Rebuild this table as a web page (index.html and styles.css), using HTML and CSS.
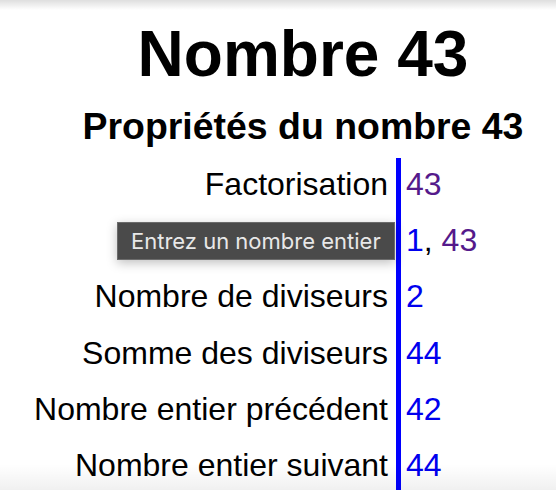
FILE: index.html
```html
<!DOCTYPE html>
<html lang="fr">
<head>
<meta charset="utf-8">
<title>Nombre 43</title>
<link rel="stylesheet" href="styles.css">
</head>
<body>
<header class="head">
  <h1 class="title">Nombre 43</h1>
  <h3 class="subtitle">Propriétés du nombre 43</h3>
</header>
<main class="props">
  <div class="label">Factorisation</div>
  <div class="value"><a class="visited" href="#">43</a></div>
  <div class="label"></div>
  <div class="value"><a class="link" href="#">1</a>, <a class="visited" href="#">43</a></div>
  <div class="label">Nombre de diviseurs</div>
  <div class="value"><a class="link" href="#">2</a></div>
  <div class="label">Somme des diviseurs</div>
  <div class="value"><a class="link" href="#">44</a></div>
  <div class="label">Nombre entier précédent</div>
  <div class="value"><a class="link" href="#">42</a></div>
  <div class="label">Nombre entier suivant</div>
  <div class="value"><a class="link" href="#">44</a></div>
</main>
<div class="tooltip">Entrez un nombre entier</div>
<div class="shade-top"></div>
<div class="shade-bottom"></div>
</body>
</html>
```
FILE: styles.css
```css
html, body {
  margin: 0;
  padding: 0;
  background: #ffffff;
  overflow: hidden;
}
body {
  font-family: "Liberation Sans", Arial, sans-serif;
  font-size: 32px;
  color: #000;
  width: 556px;
  height: 490px;
  position: relative;
}
.head {
  padding-left: 50px;
  text-align: center;
}
.title {
  font-size: 64px;
  font-weight: bold;
  margin: 17px 0 0;
  line-height: normal;
}
.subtitle {
  font-size: 37.44px;
  font-weight: bold;
  margin: 14px 0 10px;
  line-height: normal;
}
.props {
  display: grid;
  grid-template-columns: 396px 1fr;
  grid-auto-rows: 56.3px;
}
.label {
  text-align: right;
  padding-right: 8px;
  padding-bottom: 4px;
  display: flex;
  align-items: center;
  justify-content: flex-end;
  white-space: nowrap;
}
.value {
  border-left: 5px solid #0000ff;
  padding-left: 5px;
  padding-bottom: 4px;
  display: flex;
  align-items: center;
  white-space: pre;
}
.value a {
  text-decoration: none;
}
.link {
  color: #0000ee;
}
.visited {
  color: #551a8b;
}
.tooltip {
  position: absolute;
  left: 117px;
  top: 222px;
  width: 278px;
  height: 38px;
  box-sizing: border-box;
  background: #4a4a4a;
  border: 1px solid #6b6b6b;
  color: #e8e8e8;
  font-family: Inter, "Liberation Sans", sans-serif;
  font-size: 22px;
  line-height: 36px;
  padding-left: 13px;
  box-shadow: 0 3px 10px rgba(0, 0, 0, 0.25);
  white-space: nowrap;
}
.shade-top {
  position: absolute;
  left: 0;
  top: 0;
  width: 100%;
  height: 10px;
  background: linear-gradient(to bottom, rgba(0, 0, 0, 0.13), rgba(0, 0, 0, 0));
  pointer-events: none;
}
.shade-bottom {
  position: absolute;
  left: 0;
  bottom: 0;
  width: 100%;
  height: 26px;
  background: linear-gradient(to bottom, rgba(0, 0, 0, 0), rgba(0, 0, 0, 0.06));
  pointer-events: none;
}
```
